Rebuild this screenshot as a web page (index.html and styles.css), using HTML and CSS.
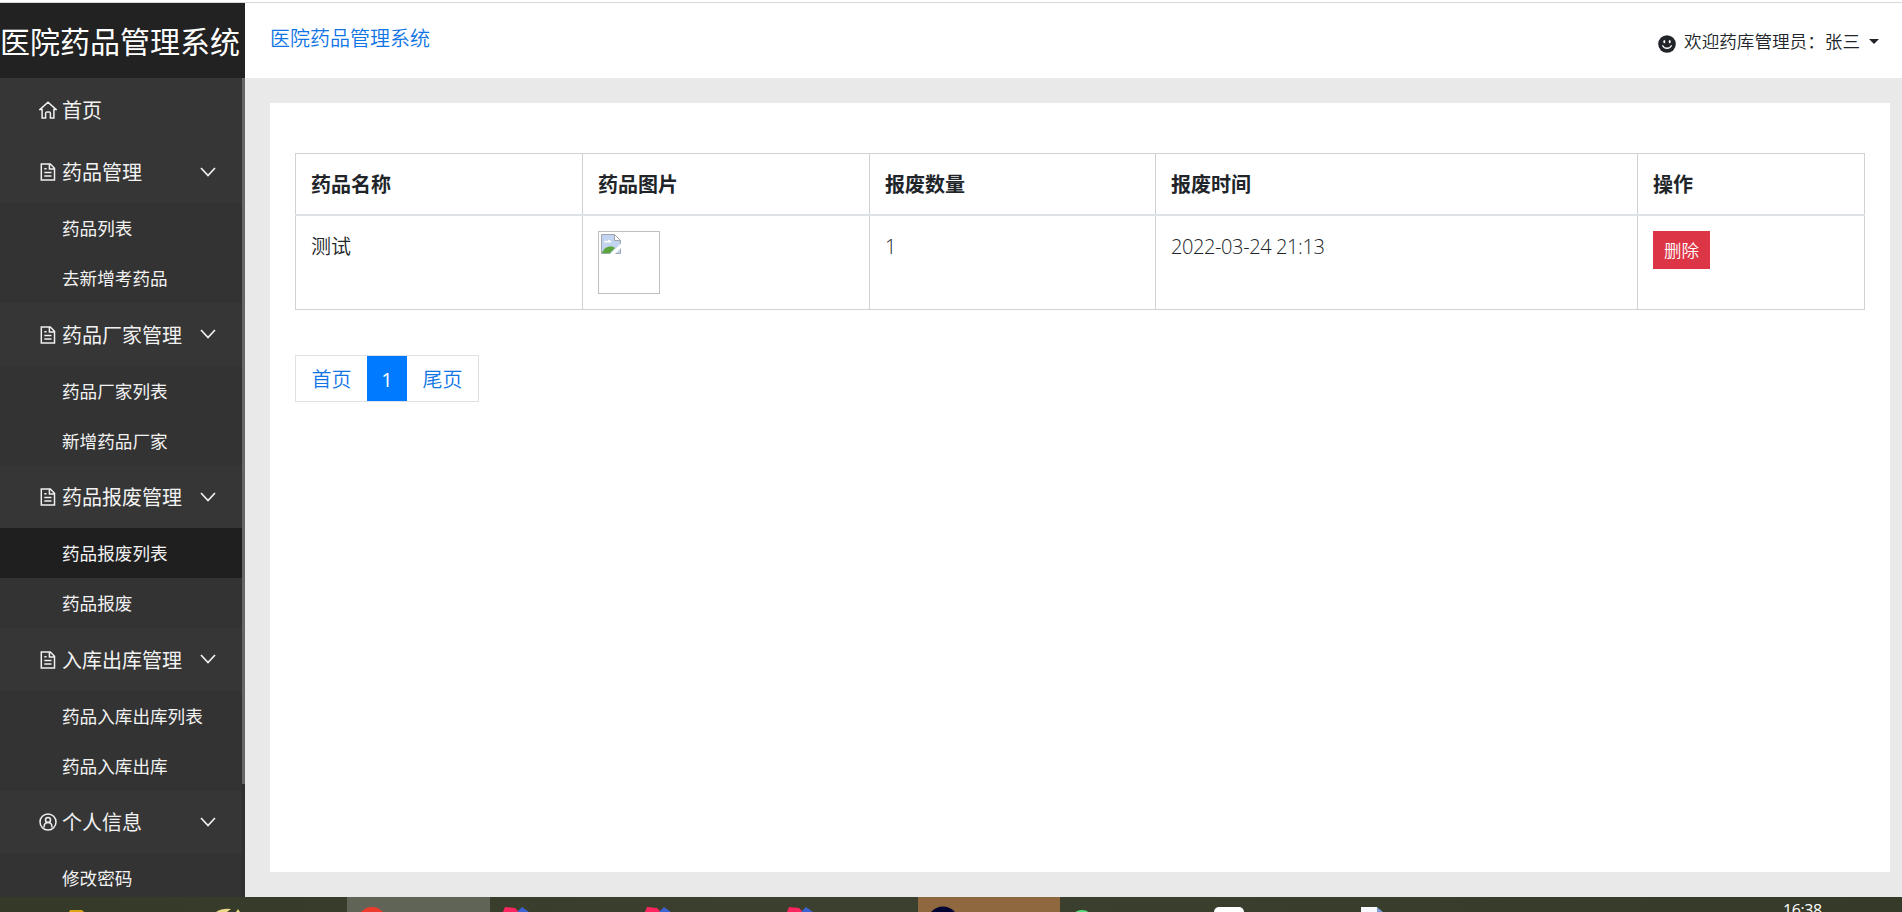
FILE: index.html
```html
<!DOCTYPE html>
<html lang="zh-CN">
<head>
<meta charset="utf-8">
<title>医院药品管理系统</title>
<link rel="stylesheet" href="styles.css">
</head>
<body>
<svg width="0" height="0" class="defs">
  <symbol id="file" viewBox="0 0 18 18"><path d="M2.3 1h9l4.2 4.2V17H2.3zM10.4 1v5h5.1M5.3 5.8h2.3M5.3 9.4h7.2M5.3 13h7.2"/></symbol>
  <symbol id="down" viewBox="0 0 16 10"><path d="M1 1l7 7.6L15 1"/></symbol>
</svg>
<div class="screen">
  <div class="top-edge"></div>
  <div class="app">
    <aside class="sidebar">
      <div class="brand">医院药品管理系统</div>
      <div class="scroll">
        <nav class="menu">
          <a class="item"><svg class="icon" viewBox="0 0 18 18"><path d="M.8 8.6L9 1.3l8.2 7.3h-2.3V17h-3.5v-4.6a1.3 1.3 0 0 0-1.3-1.3H7.900a1.300 1.300 0 0 0-1.300 1.300V17H3.100V8.600z"/></svg><span>首页</span></a>
          <a class="item"><svg class="icon"><use href="#file"/></svg><span>药品管理</span><svg class="arrow"><use href="#down"/></svg></a>
          <a class="sub">药品列表</a>
          <a class="sub">去新增考药品</a>
          <a class="item"><svg class="icon"><use href="#file"/></svg><span>药品厂家管理</span><svg class="arrow"><use href="#down"/></svg></a>
          <a class="sub">药品厂家列表</a>
          <a class="sub">新增药品厂家</a>
          <a class="item"><svg class="icon"><use href="#file"/></svg><span>药品报废管理</span><svg class="arrow"><use href="#down"/></svg></a>
          <a class="sub active">药品报废列表</a>
          <a class="sub">药品报废</a>
          <a class="item"><svg class="icon"><use href="#file"/></svg><span>入库出库管理</span><svg class="arrow"><use href="#down"/></svg></a>
          <a class="sub">药品入库出库列表</a>
          <a class="sub">药品入库出库</a>
          <a class="item"><svg class="icon" viewBox="0 0 18 18"><circle cx="9" cy="9" r="8"/><circle cx="9" cy="6.900" r="2.500"/><path d="M5 14.600c0-3.300 1.600-5.200 4-5.200s4 1.900 4 5.200"/></svg><span>个人信息</span><svg class="arrow"><use href="#down"/></svg></a>
          <a class="sub">修改密码</a>
        </nav>
        <div class="track"><div class="thumb"></div></div>
      </div>
    </aside>
    <div class="main">
      <header class="header">
        <a class="home-link">医院药品管理系统</a>
        <div class="user">
          <svg class="smile" viewBox="0 0 18 18"><circle cx="9" cy="9" r="8.800" fill="#212529"/><ellipse cx="6.300" cy="6.700" rx="1" ry="1.600" fill="#fff"/><ellipse cx="11.700" cy="6.700" rx="1" ry="1.600" fill="#fff"/><path d="M4.700 10.700c1.800 3.400 6.800 3.400 8.600 0" fill="none" stroke="#fff" stroke-width="1.300" stroke-linecap="round"/></svg>
          <span>欢迎药库管理员：张三</span>
          <i class="caret"></i>
        </div>
      </header>
      <div class="content">
        <section class="card">
          <table class="table">
            <colgroup><col class="c1"><col class="c2"><col class="c3"><col class="c4"><col class="c5"></colgroup>
            <thead><tr><th>药品名称</th><th>药品图片</th><th>报废数量</th><th>报废时间</th><th>操作</th></tr></thead>
            <tbody><tr>
              <td class="text">测试</td>
              <td><div class="picture"><svg width="20" height="20" viewBox="0 0 20 20"><path d="M.5.500H13.500L19.500 6.500V19.500H.500z" fill="#c3d4f0" stroke="#a0a6ad"/><path d="M3 8.500c0-2 2.500-2.500 3.200-1 .8-2.500 4.300-2 4.300 1z" fill="#fff"/><path d="M1 19c2-6.500 9-8 13-5l-5 5z" fill="#5aa53c"/><path d="M9 20L20 9.500V14l-6 6z" fill="#fff"/><path d="M13.500.500v6h6z" fill="#fff" stroke="#a0a6ad"/></svg></div></td>
              <td class="text">1</td>
              <td class="text"><span class="date">2022-03-24 21:13</span></td>
              <td><button class="delete">删除</button></td>
            </tr></tbody>
          </table>
          <div class="pages"><a class="page">首页</a><a class="page current">1</a><a class="page">尾页</a></div>
        </section>
      </div>
    </div>
  </div>
  <footer class="taskbar">
    <svg class="tasks" width="1783" height="15" viewBox="0 0 1783 15">
      <path d="M347 0h143v15H347z" fill="#5f6456"/><path d="M918 0h142v15H918z" fill="#8f6840"/>
      <path d="M69 15l1-2h12l2 2z" fill="#dda514"/>
      <path d="M216 15q6-4 15-3l-4 3zM236 15l2-3 2 3z" fill="#ead888"/>
      <circle cx="372" cy="24.500" r="14.500" fill="#ec3b2c"/>
      <g id="pair"><path d="M503 15l2-5 10 1 4 4z" fill="#ff2560"/><path d="M517 15l5-5 7 5z" fill="#3d63d2"/></g>
      <use href="#pair" x="142"/><use href="#pair" x="284"/>
      <circle cx="943" cy="25" r="15.500" fill="#040434"/>
      <circle cx="1082" cy="25" r="12" fill="#55e07c"/>
      <rect x="1214" y="10" width="30" height="12" rx="5" fill="#fff"/>
      <path d="M1361 10h16v5h-16z" fill="#f6faff"/><path d="M1377 10l6 5h-6z" fill="#7d9bd4"/>
    </svg>
    <span class="clock">16:38</span>
  </footer>
</div>
</body>
</html>
```
FILE: styles.css
```css
* { box-sizing: border-box; }
body {
  margin: 0;
  font: 20px/30px "Open Sans", "Noto Sans CJK SC", sans-serif;
  color: #212529;
  background: #fff;
}
.defs { position: absolute; }
.screen { display: flex; flex-direction: column; width: 1902px; height: 912px; overflow: hidden; }
.top-edge { flex: none; height: 3px; border-bottom: 1px solid #d8d9dc; }
.app { display: flex; height: 894px; }
.sidebar { display: flex; flex-direction: column; width: 245px; overflow: hidden; background: #333; }
.brand { flex: none; height: 75px; font-size: 30px; line-height: 77px; color: #fff; background: #222; white-space: nowrap; }
.scroll { display: flex; height: 819px; overflow: hidden; }
.menu { width: 242px; }
.item {
  display: flex; align-items: center; height: 62.5px; padding: 1.500px 26.500px 0 38.500px;
  color: #f2f2f2; background: #363636;
}
.icon { width: 18px; height: 18px; margin: 0 5.500px 1px 0; fill: none; stroke: #f0f0f0; stroke-width: 1.500; }
.arrow { width: 16px; height: 10px; margin: 0 0 2px auto; fill: none; stroke: #f0f0f0; stroke-width: 1.700; }
.item span { padding-top: 1px; }
.sub { display: block; height: 50px; padding-left: 62px; font-size: 17.6px; line-height: 50px; color: #f2f2f2; background: #333; }
.sub.active { background: #1f1f1f; }
.track { width: 3px; background: #303030; }
.thumb { height: 706px; background: #666; }
.main { display: flex; flex-direction: column; flex: 1; font-weight: 350; background: #e9e9e9; }
.header { display: flex; justify-content: space-between; height: 75px; padding: 0 23px 0 25px; background: #fff; }
.home-link { color: #0f74e4; line-height: 71px; }
.user { display: flex; align-items: center; height: 76px; font-size: 17.6px; }
.smile { width: 18px; height: 18px; margin: 5px 8px 0 0; }
.caret { margin-left: 9px; border: 5px solid transparent; border-top-color: #212529; border-bottom: 0; }
.content { flex: 1; padding: 25px 12px 25px 25px; }
.card { height: 769px; padding: 50px 25px; background: #fff; }
.table { width: 1570px; table-layout: fixed; border-collapse: collapse; }
.c1, .c2 { width: 287px; }
.c3 { width: 286px; }
.c4 { width: 482px; }
.table th, .table td { padding: 15px; border: 1px solid #d0d3d6; text-align: left; vertical-align: top; }
.table th { height: 61px; padding: 16px 15px 13px; border-bottom: 2px solid #dee2e6; font-weight: 700; }
.table td { height: 94.500px; }
.table .text { padding-top: 16px; }
.picture { width: 62px; height: 63px; padding: 2px; border: 1px solid #bfbfbf; line-height: 0; }
.date { letter-spacing: -.4px; }
.delete {
  display: block; width: 57px; height: 38px; padding: 0; border: 0;
  font: 350 17.5px/38px "Noto Sans CJK SC", sans-serif; color: #fff; background: #dc3545;
}
.pages { display: flex; width: 184px; height: 47px; margin-top: 45px; border: 1px solid #dee2e6; }
.page { flex: none; width: 71px; text-align: center; line-height: 48px; color: #0f74e4; white-space: nowrap; }
.current { width: 40px; height: 45px; font-weight: 400; line-height: 47px; color: #fff; background: #007bff; }
.taskbar { display: flex; height: 15px; overflow: hidden; background: linear-gradient(90deg, #343a27, #3c412f 45%, #353a29); }
.tasks { flex: none; }
.clock { margin-top: 1px; font-size: 16px; line-height: 24px; letter-spacing: -.4px; color: #fff; }
```
